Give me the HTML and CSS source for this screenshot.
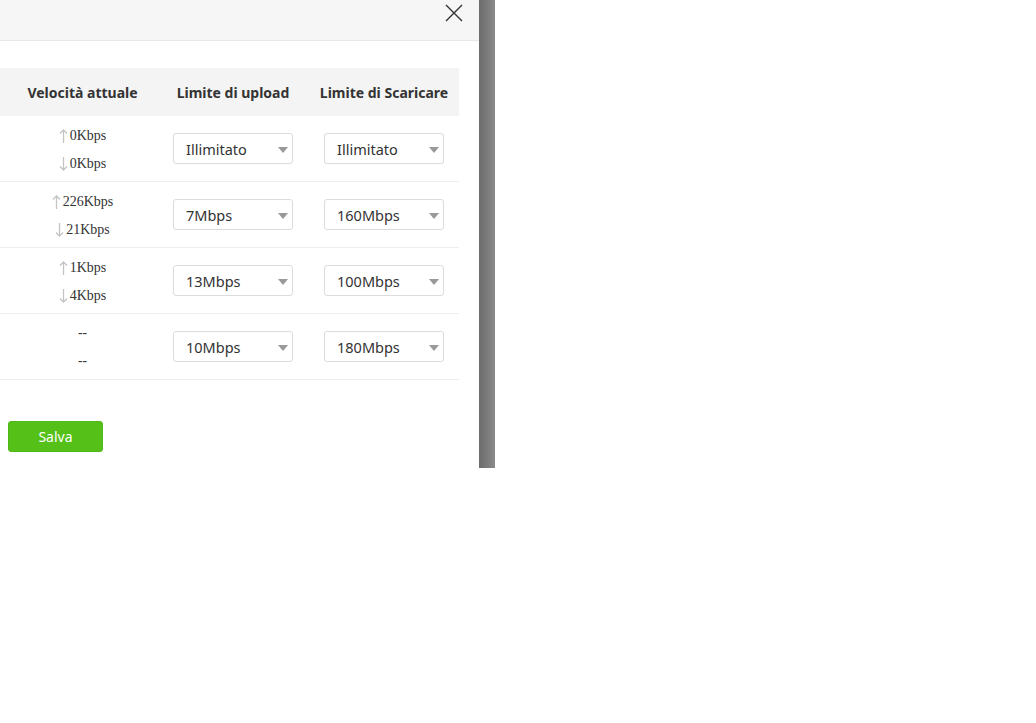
FILE: index.html
```html
<!DOCTYPE html>
<html lang="it">
<head>
    <meta charset="UTF-8">
    <title>Limite di velocità</title>
    <link rel="stylesheet" href="styles.css">
</head>
<body>
    <div class="screen">
        <div class="dialog">
            <div class="dialog-head">
                <button type="button" class="close-btn" aria-label="Chiudi">
                    <svg width="18" height="18" viewBox="0 0 18 18">
                        <path d="M1 1L17 17M17 1L1 17" stroke="#333" stroke-width="1.4" fill="none"/>
                    </svg>
                </button>
            </div>
            <div class="dialog-body">
                <div class="speed-table">
                    <div class="row head">
                        <div class="cell">Velocità attuale</div>
                        <div class="cell">Limite di upload</div>
                        <div class="cell">Limite di Scaricare</div>
                    </div>

                    <div class="row">
                        <div class="cell rate">
                            <span><svg class="arrow" viewBox="0 0 9 14"><path d="M4.5 14V1M1 4.5L4.5 1L8 4.5"/></svg>0Kbps</span>
                            <span><svg class="arrow" viewBox="0 0 9 14"><path d="M4.5 0V13M1 9.5L4.5 13L8 9.5"/></svg>0Kbps</span>
                        </div>
                        <div class="cell"><div class="select">Illimitato</div></div>
                        <div class="cell"><div class="select">Illimitato</div></div>
                    </div>

                    <div class="row">
                        <div class="cell rate">
                            <span><svg class="arrow" viewBox="0 0 9 14"><path d="M4.5 14V1M1 4.5L4.5 1L8 4.5"/></svg>226Kbps</span>
                            <span><svg class="arrow" viewBox="0 0 9 14"><path d="M4.5 0V13M1 9.5L4.5 13L8 9.5"/></svg>21Kbps</span>
                        </div>
                        <div class="cell"><div class="select">7Mbps</div></div>
                        <div class="cell"><div class="select">160Mbps</div></div>
                    </div>

                    <div class="row">
                        <div class="cell rate">
                            <span><svg class="arrow" viewBox="0 0 9 14"><path d="M4.5 14V1M1 4.5L4.5 1L8 4.5"/></svg>1Kbps</span>
                            <span><svg class="arrow" viewBox="0 0 9 14"><path d="M4.5 0V13M1 9.5L4.5 13L8 9.5"/></svg>4Kbps</span>
                        </div>
                        <div class="cell"><div class="select">13Mbps</div></div>
                        <div class="cell"><div class="select">100Mbps</div></div>
                    </div>

                    <div class="row">
                        <div class="cell rate empty">
                            <span>--</span>
                            <span>--</span>
                        </div>
                        <div class="cell"><div class="select">10Mbps</div></div>
                        <div class="cell"><div class="select">180Mbps</div></div>
                    </div>
                </div>

                <button type="button" class="save-btn">Salva</button>
            </div>
        </div>
        <div class="shade"></div>
    </div>
</body>
</html>
```

FILE: styles.css
```css
body {
    margin: 0;
    background: #fff;
    font-family: "Noto Sans", "Open Sans", sans-serif;
    color: #333;
}

.screen {
    display: flex;
    align-items: stretch;
    height: 468px;
}

.dialog {
    width: 479px;
    background: #fff;
    overflow: hidden;
}

.shade {
    width: 16px;
    background: linear-gradient(90deg, #6c6c6c, #8a8a8a);
}

.dialog-head {
    height: 40px;
    background: #f6f6f6;
    border-bottom: 1px solid #e8e8e8;
    display: flex;
    justify-content: flex-end;
    align-items: flex-start;
}

.close-btn {
    background: none;
    border: none;
    padding: 0;
    margin: 4px 16px 0 0;
    width: 18px;
    height: 18px;
    cursor: pointer;
}

.close-btn svg {
    display: block;
}

.dialog-body {
    padding-top: 27px;
}

.speed-table {
    width: 459px;
}

.row {
    display: grid;
    grid-template-columns: 165px 136px 158px;
    height: 65px;
    border-bottom: 1px solid #eee;
}

.row.head {
    height: 48px;
    border-bottom: none;
    background: #f4f4f4;
    font-size: 14px;
    font-weight: bold;
}

.cell {
    display: flex;
    align-items: center;
    justify-content: center;
}

.row .cell:nth-child(3) {
    padding-left: 8px;
}

.cell.rate {
    flex-direction: column;
    gap: 8px;
    padding-top: 3px;
    font-family: "Liberation Serif", serif;
    font-size: 14px;
    line-height: 20px;
}

.cell.rate span {
    display: flex;
    align-items: center;
}

.cell.rate.empty {
    font-family: "Noto Sans", sans-serif;
    padding-top: 1px;
}

.arrow {
    width: 9px;
    height: 14px;
    margin-right: 2px;
    fill: none;
    stroke: #c4c4c4;
    stroke-width: 1.3;
}

.select {
    position: relative;
    box-sizing: border-box;
    width: 120px;
    height: 31px;
    border: 1px solid #dcdcdc;
    border-radius: 3px;
    padding: 1px 0 0 12px;
    font-size: 14.5px;
    line-height: 29px;
    color: #333;
}

.select::after {
    content: "";
    position: absolute;
    right: 4px;
    top: 13px;
    border-left: 5px solid transparent;
    border-right: 5px solid transparent;
    border-top: 6px solid #999;
    width: 0;
    height: 0;
}

.save-btn {
    display: block;
    margin: 41px 0 0 8px;
    width: 95px;
    height: 31px;
    background: #55c018;
    border: 1px solid #52b81a;
    border-radius: 3px;
    color: #fff;
    font-family: "Noto Sans", sans-serif;
    font-size: 14px;
    cursor: pointer;
}
```
